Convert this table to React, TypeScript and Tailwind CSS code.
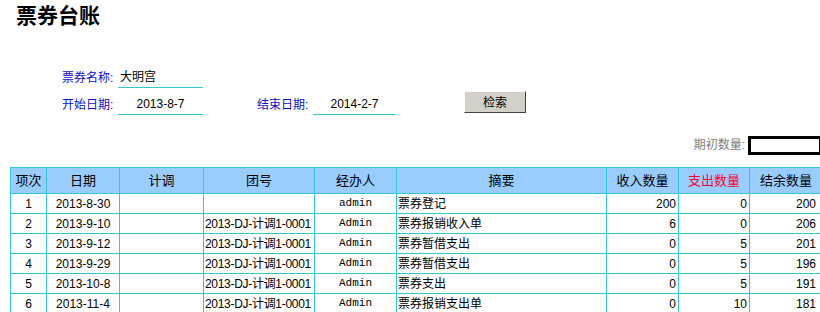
import React from 'react';

interface Row {
  no: number;
  date: string;
  team: string;
  agent: string;
  summary: string;
  inQty: number;
  outQty: number;
  balance: number;
}

const rows: Row[] = [
  { no: 1, date: '2013-8-30', team: '', agent: 'admin', summary: '票券登记', inQty: 200, outQty: 0, balance: 200 },
  { no: 2, date: '2013-9-10', team: '2013-DJ-计调1-0001', agent: 'Admin', summary: '票券报销收入单', inQty: 6, outQty: 0, balance: 206 },
  { no: 3, date: '2013-9-12', team: '2013-DJ-计调1-0001', agent: 'Admin', summary: '票券暂借支出', inQty: 0, outQty: 5, balance: 201 },
  { no: 4, date: '2013-9-29', team: '2013-DJ-计调1-0001', agent: 'Admin', summary: '票券暂借支出', inQty: 0, outQty: 5, balance: 196 },
  { no: 5, date: '2013-10-8', team: '2013-DJ-计调1-0001', agent: 'Admin', summary: '票券支出', inQty: 0, outQty: 5, balance: 191 },
  { no: 6, date: '2013-11-4', team: '2013-DJ-计调1-0001', agent: 'Admin', summary: '票券报销支出单', inQty: 0, outQty: 10, balance: 181 },
];

const th = 'border border-[#33c6d4] bg-[#99ccff] font-normal text-[13px] p-0';
const td = 'border border-[#33c6d4] p-0 h-[20px] whitespace-nowrap overflow-hidden';

export default function App() {
  return (
    <div className="w-[820px] h-[312px] overflow-hidden bg-white text-black font-['Liberation_Sans','Noto_Sans_CJK_SC',sans-serif]">
      <h1 className="pl-[16px] h-[28px] text-[21px] leading-[28px] font-bold font-['Noto_Sans_CJK_SC',sans-serif]">
        票券台账
      </h1>

      <div className="pl-[62px] mt-[41px] text-[12px]">
        <div className="flex items-end h-[19px]">
          <span className="w-[56px] text-[#1010c0] leading-[16px] pb-[2px]">票券名称:</span>
          <div className="w-[85px] h-[19px] border-b border-[#33c6d4] pl-[2px] leading-[17px]">大明宫</div>
        </div>

        <div className="flex items-end h-[19px] mt-[8px]">
          <span className="w-[56px] text-[#1010c0] leading-[16px] pb-[2px]">开始日期:</span>
          <div className="w-[85px] h-[19px] border-b border-[#33c6d4] text-center leading-[17px]">2013-8-7</div>
          <span className="ml-[54px] w-[56px] text-[#1010c0] leading-[16px] pb-[2px]">结束日期:</span>
          <div className="w-[83px] h-[19px] border-b border-[#33c6d4] text-center leading-[17px]">2014-2-7</div>
          <button className="ml-[68px] mb-[2px] w-[62px] h-[22px] bg-[#d4d0c8] border border-t-white border-l-white border-r-[#404040] border-b-[#404040] text-[12px] leading-[18px] font-['Noto_Sans_CJK_SC',sans-serif]">
            检索
          </button>
        </div>
      </div>

      <div className="flex justify-end items-center mt-[20px] h-[20px] text-[12px]">
        <span className="text-[#808080] mr-[3px]">期初数量:</span>
        <div className="w-[74px] h-[19px] border-[3px] border-black -mr-[2px]" />
      </div>

      <table className="ml-[10px] mt-[12px] border-collapse table-fixed w-[812px] text-[12px]">
        <colgroup>
          <col className="w-[36px]" />
          <col className="w-[73px]" />
          <col className="w-[84px]" />
          <col className="w-[111px]" />
          <col className="w-[82px]" />
          <col className="w-[210px]" />
          <col className="w-[72px]" />
          <col className="w-[71px]" />
          <col className="w-[73px]" />
        </colgroup>
        <thead>
          <tr className="h-[26px]">
            <th className={th}>项次</th>
            <th className={th}>日期</th>
            <th className={th}>计调</th>
            <th className={th}>团号</th>
            <th className={th}>经办人</th>
            <th className={th}>摘要</th>
            <th className={th}>收入数量</th>
            <th className={`${th} text-[#ff0033]`}>支出数量</th>
            <th className={th}>结余数量</th>
          </tr>
        </thead>
        <tbody>
          {rows.map((r) => (
            <tr key={r.no}>
              <td className={`${td} text-center`}>{r.no}</td>
              <td className={`${td} text-center`}>{r.date}</td>
              <td className={td}></td>
              <td className={`${td} pl-[1px] tracking-[-0.3px]`}>{r.team}</td>
              <td className={`${td} text-center font-['Liberation_Mono',monospace] text-[11px]`}>{r.agent}</td>
              <td className={`${td} pl-[1px]`}>{r.summary}</td>
              <td className={`${td} text-right pr-[2px]`}>{r.inQty}</td>
              <td className={`${td} text-right pr-[2px]`}>{r.outQty}</td>
              <td className={`${td} text-right pr-[6px]`}>{r.balance}</td>
            </tr>
          ))}
        </tbody>
      </table>
    </div>
  );
}
